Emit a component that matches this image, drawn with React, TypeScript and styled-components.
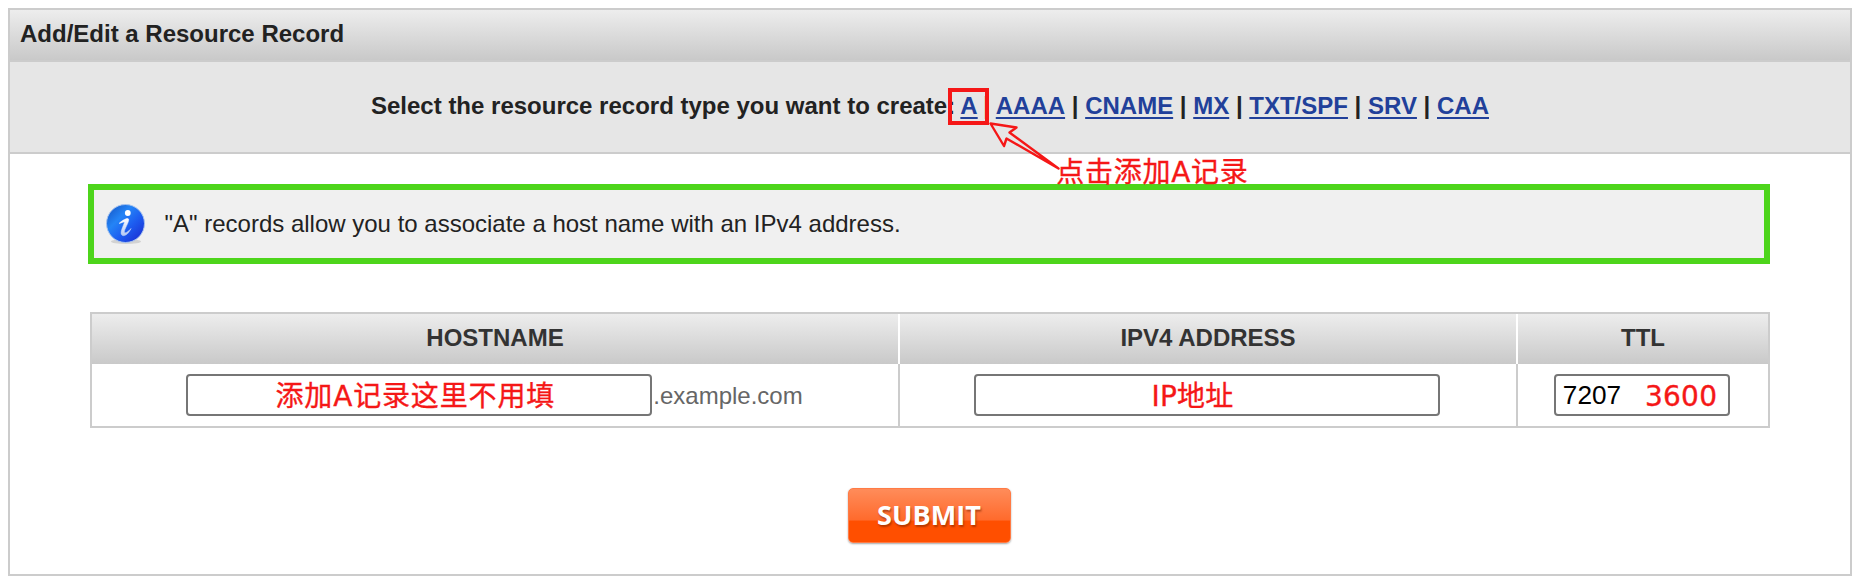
import React from "react";
import styled, { createGlobalStyle } from "styled-components";

const arial = `"Liberation Sans", Arial, Helvetica, sans-serif`;

const GlobalStyle = createGlobalStyle`
  *, *::before, *::after { box-sizing: border-box; }
  body { margin: 0; background: #fff; color: #222; font: 24px/28px ${arial}; }
`;

const Page = styled.main`
  padding: 8px;
  height: 584px;
`;

const Panel = styled.section`
  height: 568px;
  border: 2px solid #ccc;
`;

const PanelTitle = styled.h1`
  height: 52px;
  margin: 0;
  padding: 10px 10px 0;
  border-bottom: 2px solid #ccc;
  background: linear-gradient(#ededed, #c9c9c9);
  font: bold 24px/28px ${arial};
`;

const TypeBar = styled.nav`
  display: flex;
  justify-content: center;
  height: 92px;
  padding-top: 30px;
  border-bottom: 2px solid #ccc;
  background: #e6e6e6;
  font-weight: bold;
  white-space: pre;
`;

const TypeLink = styled.a`
  color: #21409a;
  text-decoration: underline;
  text-decoration-thickness: 2px;
  text-underline-offset: 3px;
`;

const Marked = styled.span`
  position: relative;
  margin: 0 -1px 0 -1.5px;
`;

const Separator = styled.span`
  ${Marked} + & { margin-right: -1px; }
`;

const MarkBox = styled.span`
  position: absolute;
  left: -12.5px;
  top: -4px;
  z-index: 1;
  width: 41px;
  height: 37px;
  border: 4px solid #f51717;
`;

const Callout = styled.svg`
  position: absolute;
  left: 29px;
  top: 30px;
  overflow: visible;
`;

const RedText = styled.span<{ $spacing?: string; $shift?: number }>`
  margin-right: ${(p) => p.$shift ?? 0}px;
  padding-top: 3px;
  color: #f51717;
  font: 28px/32px "DejaVu Sans", "Noto Sans CJK SC", sans-serif;
  letter-spacing: ${(p) => p.$spacing ?? "0"};
  white-space: nowrap;
  -webkit-text-stroke: 0.35px #f51717;
`;

const CalloutText = styled(RedText)`
  position: absolute;
  left: 96px;
  top: 62px;
  font-weight: normal;
`;

const Content = styled.div`
  display: flex;
  flex-direction: column;
  align-items: center;
  padding-top: 30px;
`;

const Notice = styled.div`
  display: flex;
  align-items: center;
  align-self: stretch;
  height: 80px;
  margin: 0 80px 48px 78px;
  padding-left: 11px;
  border: 6px solid #4dd51b;
  background: #f0f0f0;
`;

const NoticeText = styled.p`
  margin: 0 0 0 18.5px;
`;

const Table = styled.div`
  display: grid;
  grid-template-columns: 808px 618px 250px;
  grid-template-rows: 50px 62px;
  border: 2px solid #ccc;
`;

const HeadCell = styled.div`
  display: flex;
  justify-content: center;
  padding-top: 10px;
  border-right: 2px solid #fff;
  background: linear-gradient(#ededed, #c9c9c9);
  color: #333;
  font-weight: bold;
  &:nth-child(3) { border-right: 0; }
`;

const Cell = styled.div`
  display: flex;
  align-items: center;
  justify-content: center;
  padding-right: 2px;
  border-right: 2px solid #ccc;
  color: #666;
  &:last-child { border-right: 0; }
`;

const Field = styled.div<{ $width: number }>`
  display: flex;
  align-items: center;
  justify-content: center;
  width: ${(p) => p.$width}px;
  height: 42px;
  border: 2px solid #767676;
  border-radius: 4px;
  background: #fff;
`;

const Domain = styled.span`
  margin: 2px -1px 0 1px;
`;

const TtlValue = styled.span`
  margin: 0 24px 0 -1px;
  color: #000;
  font-size: 26.2px;
`;

const Submit = styled.button`
  width: 163px;
  height: 55px;
  margin: 59.5px 2px 0 0;
  padding: 0;
  border: 1px solid #ff7b45;
  border-radius: 5px;
  background: linear-gradient(#ff8c5a 0%, #ff6a2c 59%, #ff4f00 60%, #ff4f00 100%);
  box-shadow: 0 1px 2px rgba(0, 0, 0, 0.35);
  color: #fff;
  font: bold 27px/52px "Open Sans", sans-serif;
  letter-spacing: 0.1px;
  text-shadow: 1px 2px 2px rgba(130, 40, 0, 0.6);
`;

const InfoIcon = () => (
  <svg width="41" height="42" viewBox="0 0 41 42" aria-hidden="true">
    <defs>
      <linearGradient id="ball" x1="0" y1="0" x2="1" y2="1">
        <stop offset="0" stopColor="#1450c0" />
        <stop offset="0.35" stopColor="#2484f6" />
        <stop offset="0.6" stopColor="#1d5df0" />
        <stop offset="1" stopColor="#1a24cc" />
      </linearGradient>
      <linearGradient id="letter" x1="0" y1="0" x2="0" y2="1">
        <stop offset="0" stopColor="#ffffff" />
        <stop offset="1" stopColor="#b4c8f4" />
      </linearGradient>
    </defs>
    <ellipse cx="21" cy="38.5" rx="15" ry="2.5" fill="#d2d2d2" />
    <circle cx="20.5" cy="20.5" r="19" fill="url(#ball)" stroke="#a9c4ee" />
    <circle cx="22.8" cy="10" r="2.9" fill="#fff" />
    <path d="M14 20.500C17 17.500 22 14.500 23.500 16C25 18 18.500 27 19.500 29.500C20.500 30.500 23.500 28.500 26 25.500C24 30 20.500 33.500 17.500 32.500C13.500 31 19 22 19.500 19C18.500 18.500 16.500 20 14 20.500Z" fill="url(#letter)" stroke="url(#letter)" strokeWidth="0.5" />
  </svg>
);

const otherTypes = ["AAAA", "CNAME", "MX", "TXT/SPF", "SRV", "CAA"];

export default function App() {
  return (
    <>
      <GlobalStyle />
      <Page>
        <Panel>
          <PanelTitle>Add/Edit a Resource Record</PanelTitle>
          <TypeBar>
            <span>Select the resource record type you want to create: </span>
            <Marked>
              <TypeLink>A</TypeLink>
              <MarkBox />
              <Callout width="62" height="50" fill="none" stroke="#f51717" strokeWidth="2.4" strokeLinejoin="round">
                <path d="M1.500 1.500L27.500 5.500L20.500 10.500L69.500 46.500L17.500 16.500L15 24Z" />
              </Callout>
              <CalloutText $spacing="0.7px">点击添加A记录</CalloutText>
            </Marked>
            {otherTypes.map((type) => (
              <React.Fragment key={type}>
                <Separator> | </Separator>
                <TypeLink>{type}</TypeLink>
              </React.Fragment>
            ))}
          </TypeBar>
          <Content>
            <Notice>
              <InfoIcon />
              <NoticeText>"A" records allow you to associate a host name with an IPv4 address.</NoticeText>
            </Notice>
            <Table>
              <HeadCell>HOSTNAME</HeadCell>
              <HeadCell>IPV4 ADDRESS</HeadCell>
              <HeadCell>TTL</HeadCell>
              <Cell>
                <Field $width={466}>
                  <RedText $spacing="0.85px" $shift={8}>添加A记录这里不用填</RedText>
                </Field>
                <Domain>.example.com</Domain>
              </Cell>
              <Cell>
                <Field $width={466}>
                  <RedText $spacing="0.2px" $shift={29}>IP地址</RedText>
                </Field>
              </Cell>
              <Cell>
                <Field $width={176}>
                  <TtlValue>7207</TtlValue>
                  <RedText $spacing="0.2px" $shift={3}>3600</RedText>
                </Field>
              </Cell>
            </Table>
            <Submit>SUBMIT</Submit>
          </Content>
        </Panel>
      </Page>
    </>
  );
}
